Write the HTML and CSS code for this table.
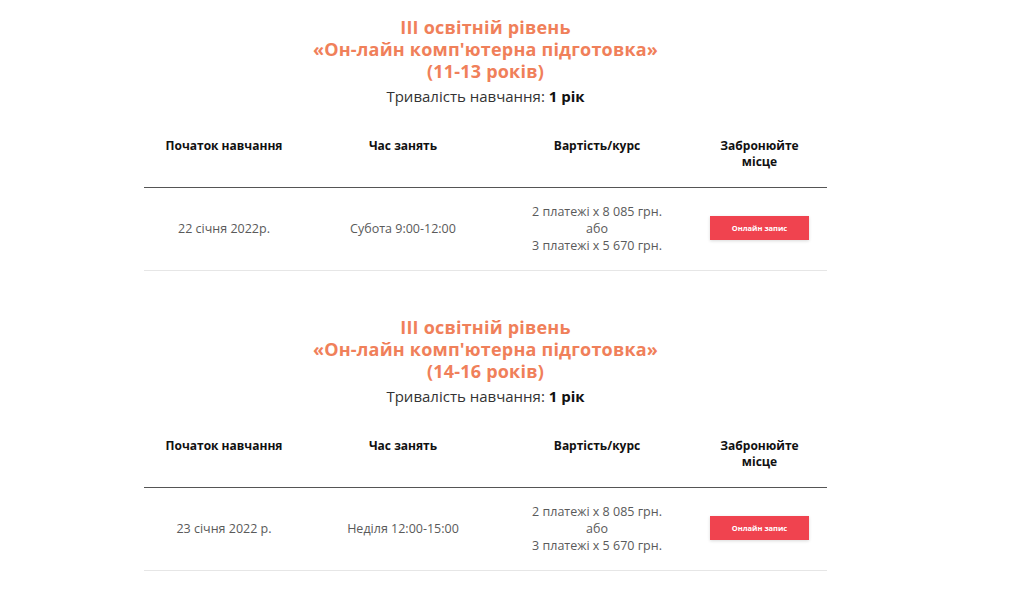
FILE: index.html
```html
<!DOCTYPE html>
<html lang="uk">
<head>
<meta charset="utf-8">
<link rel="stylesheet" href="styles.css">
</head>
<body>
<main class="page">
  <section class="course">
    <h2 class="course-title">ІІІ освітній рівень<br>«Он-лайн комп'ютерна підготовка»<br>(11-13 років)</h2>
    <p class="duration">Тривалість навчання: <b>1 рік</b></p>
    <div class="table">
      <div class="row head">
        <div class="c c1">Початок навчання</div>
        <div class="c c2">Час занять</div>
        <div class="c c3">Вартість/курс</div>
        <div class="c c4">Забронюйте<br>місце</div>
      </div>
      <div class="row body">
        <div class="c c1">22 січня 2022р.</div>
        <div class="c c2">Субота 9:00-12:00</div>
        <div class="c c3">2 платежі х 8 085 грн.<br>або<br>3 платежі х 5 670 грн.</div>
        <div class="c c4"><a class="btn" href="#">Онлайн запис</a></div>
      </div>
    </div>
  </section>
  <section class="course">
    <h2 class="course-title">ІІІ освітній рівень<br>«Он-лайн комп'ютерна підготовка»<br>(14-16 років)</h2>
    <p class="duration">Тривалість навчання: <b>1 рік</b></p>
    <div class="table">
      <div class="row head">
        <div class="c c1">Початок навчання</div>
        <div class="c c2">Час занять</div>
        <div class="c c3">Вартість/курс</div>
        <div class="c c4">Забронюйте<br>місце</div>
      </div>
      <div class="row body">
        <div class="c c1">23 січня 2022 р.</div>
        <div class="c c2">Неділя 12:00-15:00</div>
        <div class="c c3">2 платежі х 8 085 грн.<br>або<br>3 платежі х 5 670 грн.</div>
        <div class="c c4"><a class="btn" href="#">Онлайн запис</a></div>
      </div>
    </div>
  </section>
</main>
</body>
</html>
```
FILE: styles.css
```css
* { box-sizing: border-box; }
html, body { margin: 0; padding: 0; background: #fff; }
body { font-family: "Open Sans", "Liberation Sans", sans-serif; color: #333; }
.page {
  width: 683px;
  margin-left: 144px;
  padding-top: 16px;
  display: flex;
  flex-direction: column;
  gap: 45px;
}
.course { display: flex; flex-direction: column; }
.course-title {
  margin: 0;
  text-align: center;
  color: #f0805a;
  font-size: 18px;
  letter-spacing: 0.2px;
  line-height: 22px;
  font-weight: 700;
}
.duration {
  margin: 4px 0 0;
  text-align: center;
  font-size: 15px;
  line-height: 20px;
  color: #333;
}
.duration b { color: #111; font-weight: 700; }
.table { margin-top: 32px; }
.row { display: flex; align-items: center; }
.row.head {
  border-bottom: 1px solid #555;
  padding: 0 0 17px;
  align-items: flex-start;
}
.row.head .c { font-weight: 700; font-size: 12px; line-height: 16px; color: #111; }
.row.body {
  border-bottom: 1px solid #e6e6e6;
  height: 83px;
  padding-bottom: 2px;
}
.row.body .c { font-size: 12.5px; line-height: 17px; color: #5a5a5a; }
.c { text-align: center; }
.c1 { width: 160px; }
.c2 { width: 198px; }
.c3 { width: 190px; }
.c4 { width: 135px; }
.btn {
  display: inline-flex;
  align-items: center;
  justify-content: center;
  width: 99px;
  height: 24px;
  background: #f0434f;
  color: #fff;
  font-size: 7.5px;
  font-weight: 700;
  text-decoration: none;
  box-shadow: 0 1px 3px rgba(0,0,0,0.15);
}
```
